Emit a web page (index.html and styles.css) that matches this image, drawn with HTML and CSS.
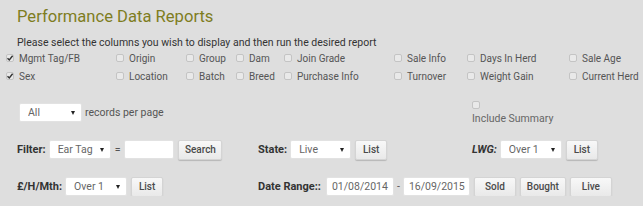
FILE: index.html
```html
<!DOCTYPE html>
<html lang="en">
<head>
	<meta charset="UTF-8">
	<title>Performance Data Reports</title>
	<link rel="stylesheet" href="styles.css">
</head>
<body>
	<div class="page">
		<h1 class="title">Performance Data Reports</h1>
		<p class="intro">Please select the columns you wish to display and then run the desired report</p>

		<!-- column picker -->
		<div class="columns">
			<label class="opt"><span class="box on"><svg viewBox="0 0 8 8"><path d="M1.5 4.2 L3.3 6 L6.6 1.8" /></svg></span>Mgmt Tag/FB</label>
			<label class="opt"><span class="box"></span>Origin</label>
			<label class="opt"><span class="box"></span>Group</label>
			<label class="opt"><span class="box"></span>Dam</label>
			<label class="opt"><span class="box"></span>Join Grade</label>
			<label class="opt"><span class="box"></span>Sale Info</label>
			<label class="opt"><span class="box"></span>Days In Herd</label>
			<label class="opt"><span class="box"></span>Sale Age</label>
			<label class="opt"><span class="box on"><svg viewBox="0 0 8 8"><path d="M1.5 4.2 L3.3 6 L6.6 1.8" /></svg></span>Sex</label>
			<label class="opt"><span class="box"></span>Location</label>
			<label class="opt"><span class="box"></span>Batch</label>
			<label class="opt"><span class="box"></span>Breed</label>
			<label class="opt"><span class="box"></span>Purchase Info</label>
			<label class="opt"><span class="box"></span>Turnover</label>
			<label class="opt"><span class="box"></span>Weight Gain</label>
			<label class="opt"><span class="box"></span>Current Herd</label>
		</div>

		<div class="paging">
			<div class="per-page">
				<span class="sel w63"><select><option>All</option></select></span>
				<span class="muted">records per page</span>
			</div>
			<label class="summary">
				<span class="box"></span>
				<span class="muted">Include Summary</span>
			</label>
		</div>

		<!-- filters -->
		<div class="filters">
			<div class="cell">
				<b>Filter:</b>
				<span class="sel w62"><select><option>Ear Tag</option></select></span>
				<span class="eq">=</span>
				<input class="txt w50" type="text">
				<button class="btn w44">Search</button>
			</div>
			<div class="cell">
				<b>State:</b>
				<span class="sel w61"><select><option>Live</option></select></span>
				<button class="btn w32">List</button>
			</div>
			<div class="cell">
				<b><i>LWG:</i></b>
				<span class="sel w62"><select><option>Over 1</option></select></span>
				<button class="btn w32">List</button>
			</div>
			<div class="cell">
				<b>£/H/Mth:</b>
				<span class="sel w62"><select><option>Over 1</option></select></span>
				<button class="btn w32">List</button>
			</div>
			<div class="cell wide">
				<b>Date Range::</b>
				<input class="txt w68 from" type="text" value="01/08/2014">
				<span class="dash">-</span>
				<input class="txt w67" type="text" value="16/09/2015">
				<button class="btn w42">Sold</button>
				<button class="btn w46">Bought</button>
				<button class="btn w42">Live</button>
			</div>
		</div>
	</div>
</body>
</html>
```

FILE: styles.css
```css
*{
	padding: 0;
	margin: 0;
	box-sizing: border-box;
}
body{
	background: #dedede;
	font-family: Roboto, "Liberation Sans", sans-serif;
	font-size: 10.5px;
	color: #555;
}
.page{
	padding: 7px 0 0 0;
}
.title{
	font-weight: 400;
	font-size: 16.6px;
	line-height: 20px;
	color: #7e7d1e;
	padding-left: 17px;
	margin-bottom: 10px;
}
.intro{
	padding-left: 17px;
	line-height: 12px;
	color: #333;
}

/* column picker */
.columns{
	display: grid;
	grid-template-columns: 110px 70px 50px 48px 110px 73px 102px auto;
	padding-left: 6px;
	font-size: 10px;
}
.opt{
	display: flex;
	align-items: center;
	height: 18px;
	white-space: nowrap;
}
.box{
	display: inline-block;
	width: 8px;
	height: 8px;
	border: 1px solid #c4c4c4;
	border-radius: 2px;
	background: #e9e9e9;
	margin-right: 5px;
	flex: none;
}
.box svg{
	display: block;
	width: 8px;
	height: 8px;
	margin: -1px 0 0 -1px;
	fill: none;
	stroke: #333;
	stroke-width: 1.4;
}

.paging{
	display: grid;
	grid-template-columns: 455px auto;
	padding-left: 17px;
	margin-top: 15px;
	height: 25px;
}
.per-page{
	display: flex;
	align-items: center;
	margin-top: 3px;
	padding-left: 2px;
	height: 19px;
	gap: 3px;
}
.summary{
	display: flex;
	flex-direction: column;
	align-items: flex-start;
}
.summary .box{
	margin-top: 1px;
}
.summary .muted{
	margin-top: 4px;
	line-height: 12px;
	color: #666;
}

/* selects, inputs, buttons */
.sel{
	position: relative;
	display: inline-block;
	height: 19px;
}
.sel select{
	appearance: none;
	-webkit-appearance: none;
	width: 100%;
	height: 19px;
	border: 1px solid #e2e2e2;
	border-radius: 2px;
	background: #fff;
	font: 10.5px Roboto, "Liberation Sans", sans-serif;
	color: #666;
	padding-left: 8px;
}
.sel:after{
	content: "";
	position: absolute;
	right: 7px;
	top: 8px;
	border-left: 2px solid transparent;
	border-right: 2px solid transparent;
	border-top: 4px solid #222;
	pointer-events: none;
}
.txt{
	height: 19px;
	border: 1px solid #e2e2e2;
	border-radius: 2px;
	background: #fff;
	font: 10.5px Roboto, "Liberation Sans", sans-serif;
	color: #666;
	padding-left: 5px;
}
.txt.from{
	margin-left: 2px;
}
.btn{
	height: 20px;
	border: 1px solid #d4d4d4;
	border-radius: 2px;
	background: linear-gradient(#f8f8f8, #e9e9e9);
	box-shadow: 0 1px 1px rgba(0,0,0,0.18);
	font: 500 10px Roboto, "Liberation Sans", sans-serif;
	color: #4a4a4a;
}
.w32{ width: 32px; }
.w42{ width: 42px; }
.w44{ width: 44px; }
.w46{ width: 46px; }
.w50{ width: 50px; }
.w61{ width: 61px; }
.w62{ width: 62px; }
.w63{ width: 63px; }
.w67{ width: 67px; }
.w68{ width: 68px; }

.filters{
	display: grid;
	grid-template-columns: 241px 214px auto;
	row-gap: 18px;
	padding-left: 17px;
	margin-top: 15px;
}
.cell{
	display: flex;
	align-items: center;
	height: 19px;
	gap: 3px;
	white-space: nowrap;
}
.cell b{
	color: #333;
	font-weight: 700;
	font-size: 11px;
}
.cell.wide{
	grid-column: span 2;
}
.eq{
	margin: 0 1px;
}
.cell .btn{
	margin-left: 1px;
}
```
